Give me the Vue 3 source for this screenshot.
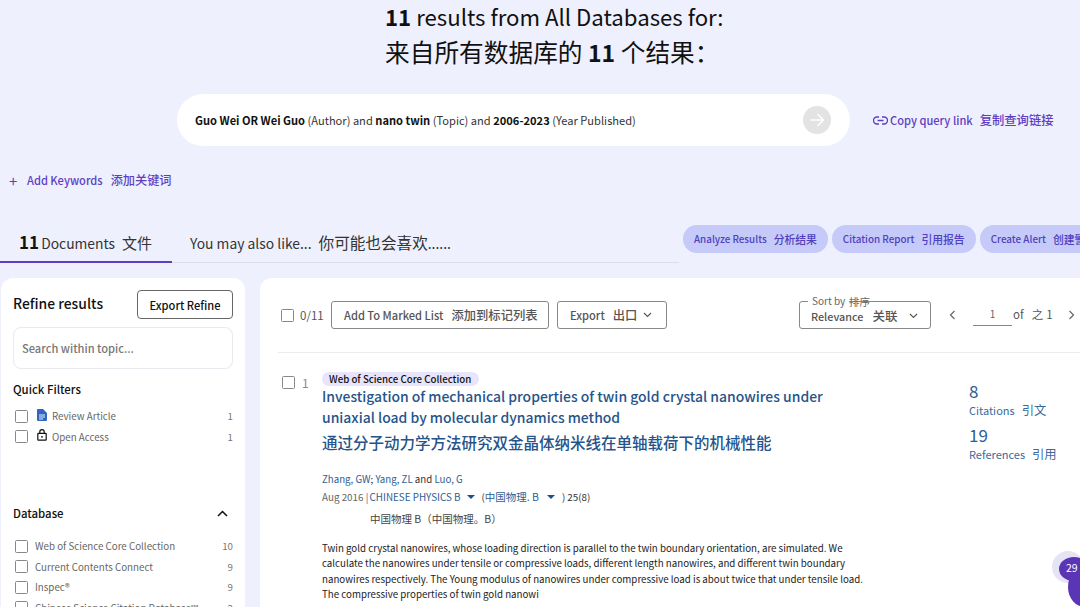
<script setup>
const quick = [
  { label: 'Review Article', count: 1, icon: 'doc' },
  { label: 'Open Access', count: 1, icon: 'lock' },
]
const databases = [
  { label: 'Web of Science Core Collection', count: 10 },
  { label: 'Current Contents Connect', count: 9 },
  { label: 'Inspec®', count: 9 },
  { label: 'Chinese Science Citation Database℠', count: 3 },
]
</script>

<template>
  <div class="page">
    <header class="head">
      <h1 class="title"><b>11</b> results from All Databases for:</h1>
      <h2 class="title second">来自所有数据库的 <b>11</b> 个结果：</h2>
    </header>

    <div class="query-row">
      <div class="query">
        <span class="query-text"><b>Guo Wei OR Wei Guo</b> (Author) and <b>nano twin</b> (Topic) and <b>2006-2023</b> (Year Published)</span>
        <span class="go">
          <svg width="16" height="16" viewBox="0 0 16 16" fill="none" stroke="#fff" stroke-width="1.4"><path d="M1.5 8h13M8.5 2l6 6-6 6"/></svg>
        </span>
      </div>
      <a class="copy">
        <svg width="15" height="9" viewBox="0 0 15 9" fill="none" stroke="#5e3fc4" stroke-width="1.4"><path d="M6 1H4a3.4 3.4 0 0 0 0 7h2M9 1h2a3.4 3.4 0 0 1 0 7H9M4.5 4.5h6"/></svg>
        <span>Copy query link</span><span class="cn">复制查询链接</span>
      </a>
    </div>

    <div class="keywords">
      <span class="plus">+</span><span>Add Keywords</span><span class="cn">添加关键词</span>
    </div>

    <div class="tabbar">
      <div class="tabs">
        <div class="tab active"><b>11</b> Documents<span class="cn-gap">文件</span></div>
        <div class="tab">You may also like...<span class="cn-gap wide">你可能也会喜欢</span>......</div>
      </div>
      <div class="actions">
        <span class="pill">Analyze Results<span class="pill-cn">分析结果</span></span>
        <span class="pill">Citation Report<span class="pill-cn">引用报告</span></span>
        <span class="pill">Create Alert<span class="pill-cn">创建警报</span></span>
      </div>
    </div>

    <main class="main">
      <aside class="side">
        <div class="side-top">
          <span class="refine">Refine results</span>
          <button class="export-refine">Export Refine</button>
        </div>
        <div class="search">Search within topic...</div>
        <h3 class="side-h quick-h">Quick Filters</h3>
        <ul class="filters">
          <li v-for="q in quick" :key="q.label" class="filter">
            <span class="box"></span>
            <svg v-if="q.icon === 'doc'" class="ficon" width="10" height="12" viewBox="0 0 10 12"><path d="M0 1a1 1 0 0 1 1-1h5l4 4v7a1 1 0 0 1-1 1H1a1 1 0 0 1-1-1z" fill="#2f66c2"/><path d="M2 6h6M2 8h6M2 10h4" stroke="#fff" stroke-width=".9"/></svg>
            <svg v-else class="ficon" width="10" height="12" viewBox="0 0 10 12" fill="none" stroke="#111" stroke-width="1.2"><rect x=".8" y="4.4" width="8.4" height="6.8" rx=".6"/><path d="M2.8 4.4V2.8a2.2 2.2 0 0 1 4.4 0v1.6"/><circle cx="5" cy="7.8" r=".9" fill="#111" stroke="none"/></svg>
            <span class="flabel">{{ q.label }}</span>
            <span class="fcount">{{ q.count }}</span>
          </li>
        </ul>
        <div class="db-head">
          <h3 class="side-h">Database</h3>
          <svg width="11" height="7" viewBox="0 0 11 7" fill="none" stroke="#111" stroke-width="1.5"><path d="M1 6l4.5-4.5L10 6"/></svg>
        </div>
        <ul class="dbs">
          <li v-for="d in databases" :key="d.label" class="filter">
            <span class="box"></span>
            <span class="dlabel">{{ d.label }}</span>
            <span class="fcount">{{ d.count }}</span>
          </li>
        </ul>
      </aside>

      <section class="results">
        <div class="toolbar">
          <span class="box big"></span>
          <span class="sel">0/11</span>
          <button class="tbtn mark">Add To Marked List<span class="cn-btn gap-l">添加到标记列表</span></button>
          <button class="tbtn exp">Export<span class="cn-btn">出口</span>
            <svg class="chev" width="9" height="6" viewBox="0 0 9 6" fill="none" stroke="#555" stroke-width="1.1"><path d="M1 1l3.5 3.5L8 1"/></svg>
          </button>
          <div class="sort">
            <span class="sort-label">Sort by</span><span class="sort-cn">排序</span>
            <span class="sort-val">Relevance<span class="cn-btn sort-zh">关联</span></span>
            <svg class="sort-chev" width="9" height="6" viewBox="0 0 9 6" fill="none" stroke="#555" stroke-width="1.1"><path d="M1 1l3.5 3.5L8 1"/></svg>
          </div>
          <div class="pager">
            <svg width="7" height="10" viewBox="0 0 7 10" fill="none" stroke="#666" stroke-width="1.2"><path d="M5.5 1l-4 4 4 4"/></svg>
            <span class="pnum">1</span>
            <span class="pof">of<span class="pzh">之</span>1</span>
            <svg class="pnext" width="7" height="10" viewBox="0 0 7 10" fill="none" stroke="#666" stroke-width="1.2"><path d="M1.5 1l4 4-4 4"/></svg>
          </div>
        </div>

        <article class="record">
          <div class="rec-left">
            <span class="box big"></span>
            <span class="rec-num">1</span>
          </div>
          <div class="rec-body">
            <span class="tag">Web of Science Core Collection</span>
            <a class="rec-title">Investigation of mechanical properties of twin gold crystal nanowires under uniaxial load by molecular dynamics method</a>
            <a class="rec-title-cn">通过分子动力学方法研究双金晶体纳米线在单轴载荷下的机械性能</a>
            <div class="authors"><a>Zhang, GW</a>; <a>Yang, ZL</a> and <a>Luo, G</a></div>
            <div class="source">
              <span class="grey">Aug 2016 | </span><a>CHINESE PHYSICS B</a><span class="tri"></span>
              <span class="paren">(<a class="zh-j">中国物理. B</a><span class="tri"></span>)</span>
              <span>25(8)</span>
            </div>
            <div class="journal-cn">中国物理 B（中国物理。B）</div>
            <p class="abstract">Twin gold crystal nanowires, whose loading direction is parallel to the twin boundary orientation, are simulated. We calculate the nanowires under tensile or compressive loads, different length nanowires, and different twin boundary nanowires respectively. The Young modulus of nanowires under compressive load is about twice that under tensile load. The compressive properties of twin gold nanowi</p>
          </div>
          <div class="metrics">
            <div class="metric"><span class="mnum">8</span><span class="mlabel">Citations<span class="mcn">引文</span></span></div>
            <div class="metric"><span class="mnum">19</span><span class="mlabel">References<span class="mcn">引用</span></span></div>
          </div>
        </article>
      </section>
    </main>

    <div class="float-badge"><span class="halo"></span><span class="blob"></span><span class="count">29</span></div>
  </div>
</template>

<style>
html, body { margin: 0; background: #eef0fd; overflow: hidden; }
</style>

<style scoped>
.page {
  position: relative;
  width: 1080px;
  height: 607px;
  overflow: hidden;
  background: #eef0fd;
  color: #111;
  font-family: "Noto Sans CJK SC", "Noto Sans", sans-serif;
}
a { color: inherit; }
ul { list-style: none; margin: 0; padding: 0; }
button { font-family: inherit; background: #fff; cursor: pointer; }

.head { height: 70px; padding-left: 385px; }
.title { margin: 0; height: 34px; font-size: 22.2px; font-weight: 400; line-height: 32px; color: #111; white-space: nowrap; }
.title b { font-weight: 700; }
.second { font-size: 24.7px; height: 36px; line-height: 34px; }
.second b { font-size: 23px; }

.query-row { display: flex; align-items: center; margin-top: 24px; padding-left: 177px; }
.query {
  display: flex; align-items: center; justify-content: space-between;
  box-sizing: border-box; width: 673px; height: 52px; padding: 0 19px 0 18px;
  background: #fff; border-radius: 26px;
}
.query-text { font-size: 11.1px; color: #333; white-space: nowrap; }
.query-text b { color: #111; font-weight: 700; }
.go { display: flex; align-items: center; justify-content: center; width: 28px; height: 28px; border-radius: 50%; background: #e3e3e3; }
.copy { display: flex; align-items: center; margin-left: 23px; gap: 2px; font-size: 11.1px; font-weight: 500; color: #5e3fc4; white-space: nowrap; }
.copy .cn { margin-left: 5px; font-size: 12.3px; }

.keywords { display: flex; align-items: center; height: 20px; margin-top: 24px; padding-left: 9px; font-size: 11.1px; font-weight: 500; color: #5e3fc4; white-space: nowrap; }
.plus { width: 18px; font-size: 15px; font-weight: 400; }
.keywords .cn { margin-left: 8px; font-size: 12.2px; }

.tabbar { display: flex; margin-top: 38px; height: 44px; }
.tabs { display: flex; box-sizing: border-box; width: 679px; height: 35px; border-bottom: 1px solid #dcdde8; flex: none; }
.tab { box-sizing: border-box; height: 35px; padding: 0 18px 0 19px; font-size: 13.85px; line-height: 28px; color: #333; white-space: nowrap; }
.tab.active { width: 172px; border-bottom: 2px solid #5e3fc4; color: #333; }
.tab b { font-size: 17px; color: #111; margin-right: -1px; }
.cn-gap { margin-left: 7px; font-size: 15px; }
.cn-gap.wide { font-size: 15.6px; }
.tab:not(.active) { padding-left: 18px; }
.actions { display: flex; gap: 4px; margin-left: 4px; margin-top: -3px; white-space: nowrap; }
.pill { display: flex; align-items: center; height: 28px; padding: 0 11px; background: #c5caf8; border-radius: 14px; font-size: 9.85px; font-weight: 500; color: #5040c0; }
.pill-cn { margin-left: 7px; font-size: 10.8px; }

.main { display: flex; gap: 15px; margin-top: 6px; align-items: flex-start; }
.side { box-sizing: border-box; flex: none; width: 244px; height: 340px; margin-left: 1px; padding: 12px 12px 0 12px; background: #fff; border-radius: 12px 12px 0 0; }
.side-top { display: flex; align-items: center; justify-content: space-between; }
.refine { font-size: 13.9px; font-weight: 500; color: #111; position: relative; top: -2px; }
.export-refine { box-sizing: border-box; width: 96px; height: 29px; padding: 0; border: 1px solid #666; border-radius: 4px; font-size: 11.1px; font-weight: 500; color: #111; }
.search { box-sizing: border-box; height: 42px; margin-top: 8px; padding: 0 8px; border: 1px solid #e8e8ee; border-radius: 8px; font-size: 11.1px; line-height: 40px; font-weight: 500; color: #777; }
.side-h { margin: 0; font-size: 11.4px; font-weight: 500; color: #111; }
.quick-h { margin-top: 10px; line-height: 20px; }
.filters { margin-top: 7px; height: 97px; }
.filter { display: flex; align-items: center; height: 20.5px; padding-left: 2px; font-size: 9.75px; color: #666; white-space: nowrap; }
.box { flex: none; box-sizing: border-box; display: block; width: 13px; height: 13px; border: 1.5px solid #888; border-radius: 1.5px; background: #fff; }
.ficon { margin-left: 9px; margin-top: -3px; flex: none; }
.flabel { margin-left: 5px; }
.dlabel { margin-left: 7px; }
.fcount { margin-left: auto; color: #777; }
.db-head { display: flex; align-items: center; justify-content: space-between; padding-right: 5px; height: 20px; }
.dbs { margin-top: 13px; }

.results { flex: 1; height: 340px; padding: 0 0 0 18px; background: #fff; border-radius: 12px 0 0 0; box-sizing: border-box; min-width: 0; }
.toolbar { position: relative; display: flex; align-items: center; height: 74px; border-bottom: 1px solid #ececf0; padding-left: 3px; white-space: nowrap; }
.sel { margin-left: 6px; font-size: 11.5px; color: #555; width: 31px; }
.tbtn { box-sizing: border-box; height: 28px; padding: 0 12px; border: 1px solid #888; border-radius: 3px; font-size: 11.1px; font-weight: 500; color: #555; display: flex; align-items: center; flex: none; }
.mark { width: 218px; }
.exp { margin-left: 8px; width: 110px; }
.cn-btn { margin-left: 8px; font-size: 12.3px; }
.sort-zh { margin-left: 9px; font-size: 12.5px; }
.chev { margin-left: 6px; }
.sort { position: relative; box-sizing: border-box; width: 132px; height: 28px; margin-left: 132px; border: 1px solid #888; border-radius: 3px; display: flex; align-items: center; padding: 0 0 0 11px; font-size: 10.8px; font-weight: 500; color: #555; }
.sort-label { position: absolute; left: 8px; top: -8px; padding: 0 4px; background: #fff; font-size: 10px; font-weight: 400; line-height: 14px; color: #666; }
.sort-cn { position: absolute; left: 49px; top: -7px; font-size: 10.5px; font-weight: 400; line-height: 14px; color: #666; }
.sort-chev { position: absolute; right: 12px; top: 11px; }
.pager { display: flex; align-items: center; margin-left: 18px; font-size: 11.5px; color: #555; }
.pnum { box-sizing: border-box; width: 39px; height: 22px; margin-left: 17px; border-bottom: 1px solid #888; text-align: center; font-size: 10px; line-height: 20px; color: #666; }
.pof { margin-left: 1px; position: relative; top: -1px; }
.pzh { margin: 0 3px 0 8px; }
.pnext { margin-left: 15px; }

.record { display: flex; padding-top: 19px; }
.rec-left { flex: none; display: flex; align-items: center; height: 21px; width: 44px; padding-left: 4px; box-sizing: border-box; gap: 7px; }
.rec-num { font-size: 12px; color: #888; }
.rec-body { flex: none; width: 545px; }
.tag { display: block; width: fit-content; height: 14px; padding: 0 8px 0 7px; border-radius: 7px; background: #e8e4fb; font-size: 9.7px; font-weight: 500; line-height: 14px; color: #111; }
.rec-title { display: block; width: 541px; font-size: 13.94px; font-weight: 500; line-height: 21px; color: #26548a; }
.rec-title-cn { display: block; margin-top: 4px; font-size: 15.5px; font-weight: 500; line-height: 20px; color: #26548a; white-space: nowrap; }
.authors { margin-top: 19px; font-size: 9.7px; line-height: 16px; color: #333; }
.authors a, .source a { color: #2f6092; }
.source { margin-top: 2px; font-size: 9.85px; line-height: 16px; color: #333; white-space: nowrap; display: flex; align-items: center; }
.grey { color: #666; white-space: pre; margin-right: -1px; }
.tri { display: inline-block; width: 0; height: 0; margin: 0 8px 0 7px; border: 4px solid transparent; border-top: 4px solid #1f4f86; border-bottom: 0; }
.paren { margin: 0 2px 0 -2px; display: inline-flex; align-items: center; }
.paren .tri { margin: 0 7px 0 8px; }
.zh-j { font-size: 10.5px; }
.journal-cn { margin-top: 6px; padding-left: 48px; font-size: 10.5px; line-height: 16px; color: #444; }
.abstract { margin: 14px 0 0; font-size: 9.72px; line-height: 15.3px; color: #222; }
.metrics { margin-left: 102px; margin-top: 7px; }
.metric { display: flex; flex-direction: column; margin-bottom: 4px; color: #3a6a9c; white-space: nowrap; }
.mnum { font-size: 17px; line-height: 23px; color: #2f6092; }
.mlabel { font-size: 11px; line-height: 17px; }
.mcn { margin-left: 7px; font-size: 12.3px; }

.float-badge { position: absolute; left: 1052px; top: 551px; width: 40px; height: 56px; }
.halo { position: absolute; left: 0; top: 0; width: 32px; height: 32px; border-radius: 50%; background: #e6e3f7; }
.blob { position: absolute; left: 7px; top: 6px; width: 30px; height: 24px; border-radius: 50%; background: #5a35b5; }
.blob::after { content: ""; position: absolute; left: 9px; top: 10px; width: 34px; height: 40px; border-radius: 50%; background: #5a35b5; }
.count { position: absolute; left: 14px; top: 10px; font-size: 10.5px; line-height: 14px; color: #fff; }
</style>
